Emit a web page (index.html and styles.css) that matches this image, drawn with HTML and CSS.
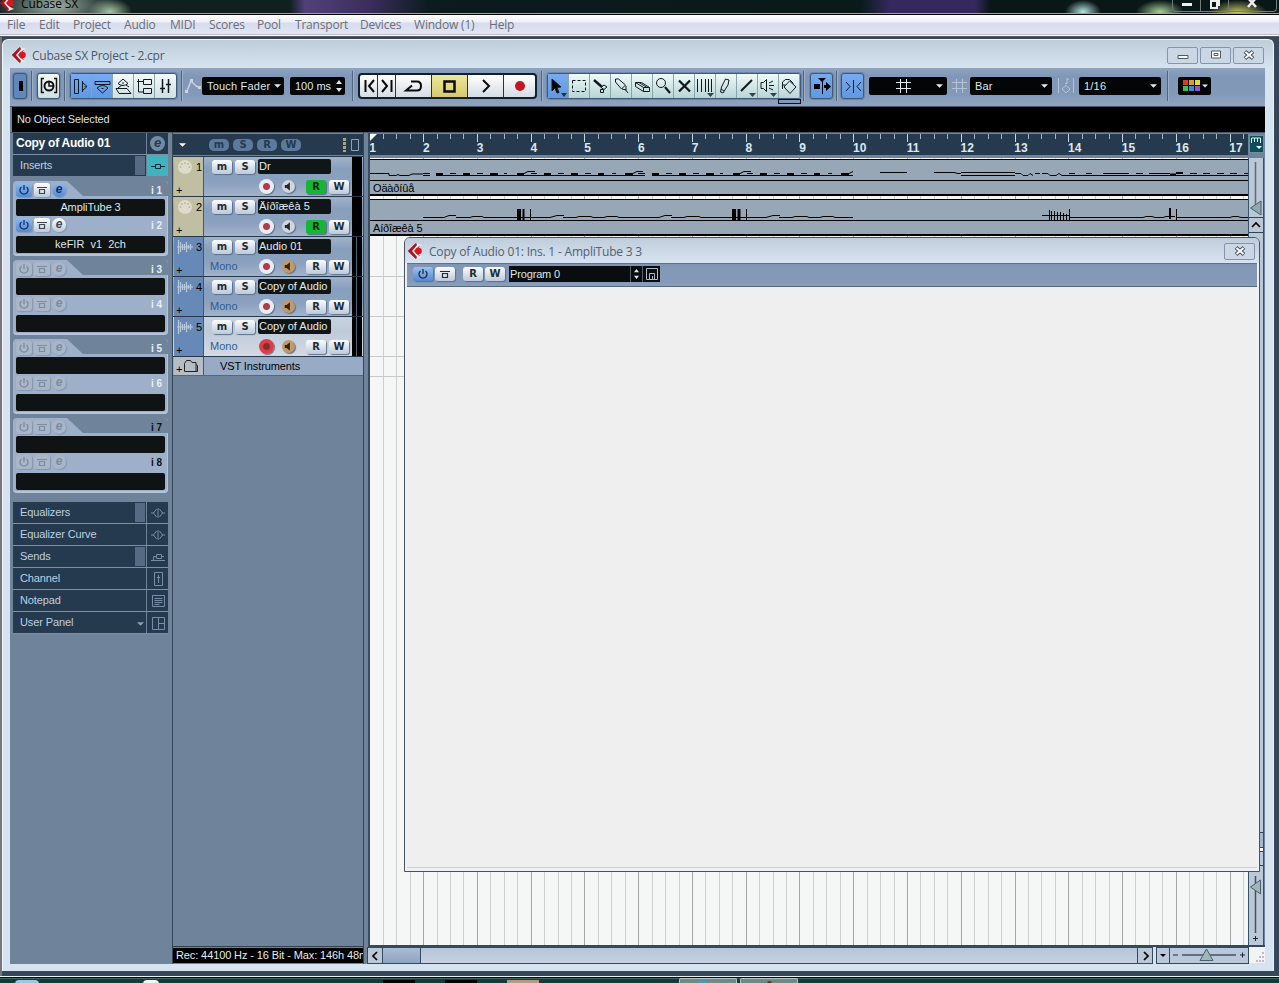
FILE: index.html
```html
<!DOCTYPE html>
<html lang="en">
<head>
    <meta charset="UTF-8">
    <title>Cubase SX</title>
    <link rel="stylesheet" href="styles.css">
</head>
<body>

    <!-- Shared icons -->
    <svg class="defs" width="0" height="0">
        <symbol id="logo" viewBox="0 0 16 16">
            <path d="M0 8 8 0l4 3-4 5 4 5-4 3z" fill="#9c1622"/>
            <path d="M8 0l6 2-4 2-4 4 4 4 4 2-6 2-5-8z" fill="#f4e9e9"/>
            <path d="M0 8 8 0l1 2-5 6 5 6-1 2z" fill="#a81420"/>
            <circle cx="10.500" cy="8" r="3.300" fill="#d8171f"/>
        </symbol>
        <symbol id="power" viewBox="0 0 16 14">
            <path d="M5.500 4a4 4 0 1 0 5 0M8 2v5" fill="none" stroke="currentColor" stroke-width="1.300"/>
        </symbol>
        <symbol id="bypass" viewBox="0 0 16 14">
            <path d="M3 4.500h10M5.500 6.500h5v4h-5z" fill="none" stroke="currentColor" stroke-width="1.200"/>
        </symbol>
        <symbol id="speaker" viewBox="0 0 14 14">
            <path d="M3 5.500h2l3.500-3v9L5 8.500H3z" fill="currentColor"/>
        </symbol>
        <symbol id="din" viewBox="0 0 16 16">
            <circle cx="8" cy="8" r="7" fill="#dddccb"/>
            <g fill="#bcbba2"><circle cx="3.500" cy="8" r="1"/><circle cx="12.500" cy="8" r="1"/><circle cx="5" cy="5" r="1"/><circle cx="11" cy="5" r="1"/><circle cx="8" cy="4" r="1"/></g>
        </symbol>
        <symbol id="wave" viewBox="0 0 16 16">
            <path d="M0 8h16M1.500 1v14M3.500 3v10M5.500 5v6M7.500 5v6M9.500 3v10M11.500 6v4M13.500 5v6" stroke="#b9c8dc" stroke-width="1.200"/>
        </symbol>
        <symbol id="close" viewBox="0 0 12 10">
            <path d="M2 1.500l8 7M10 1.500l-8 7" stroke="#4d5968" stroke-width="4"/>
            <path d="M2.500 2l7 6M9.500 2l-7 6" stroke="#fff" stroke-width="1.800"/>
        </symbol>
        <symbol id="grid" viewBox="0 0 16 16">
            <path d="M4.500 1v14M10.500 1v14M0 4.500h15M0 10.500h15" stroke="currentColor" fill="none"/>
        </symbol>
        <symbol id="down" viewBox="0 0 8 4"><path d="M0 0h8L4 4z" fill="currentColor"/></symbol>
        <symbol id="spin" viewBox="0 0 6 12"><path d="M0 4l3-4 3 4zM0 8h6l-3 4z" fill="currentColor"/></symbol>
    </svg>

    <header class="titlebar">
        <svg class="logo" width="16" height="16"><use href="#logo"/></svg>
        <span class="app-name">Cubase SX</span>
        <div class="win-buttons">
            <span><svg width="12" height="12"><path d="M1 5h10v3H1z" fill="#eee"/></svg></span>
            <span><svg width="12" height="12"><path d="M2 3h6v7H2zM5 1h5v7" fill="none" stroke="#eee" stroke-width="2"/></svg></span>
            <span class="wide"><svg width="12" height="12"><path d="M2 0l8 9M10 0L2 9" stroke="#eee" stroke-width="2.500"/></svg></span>
        </div>
    </header>

    <nav class="menu">
        <a style="width:32px">File</a><a style="width:34px">Edit</a><a style="width:51px">Project</a><a style="width:46px">Audio</a><a style="width:39px">MIDI</a><a style="width:48px">Scores</a><a style="width:38px">Pool</a><a style="width:65px">Transport</a><a style="width:54px">Devices</a><a style="width:75px">Window (1)</a><a>Help</a>
    </nav>

    <main class="desktop">
        <div class="window">
            <div class="window-title">
                <svg width="16" height="16"><use href="#logo"/></svg>
                <span>Cubase SX Project - 2.cpr</span>
                <div class="mdi-buttons">
                    <i><svg width="12" height="10"><path d="M1 5.500h10v3H1z" fill="#fff" stroke="#4d5968"/></svg></i>
                    <i><svg width="12" height="10"><path d="M1.500 1h9v7h-9z" fill="#fff" stroke="#4d5968"/><path d="M4 3.500h4v2H4z" fill="none" stroke="#4d5968"/></svg></i>
                    <i><svg width="12" height="10"><use href="#close"/></svg></i>
                </div>
            </div>

            <div class="client">
                <!-- Toolbar -->
                <div class="toolbar">
                    <span class="tool on narrow"><svg width="14" height="24"><path d="M5 7h4v10H5z"/></svg></span>
                    <b class="sep s1"></b>
                    <span class="tool"><svg width="22" height="24" fill="none" stroke="#111"><path d="M6 4.500H3.500v14H6M16 4.500h2.500v14H16" stroke-width="1.500"/><circle cx="11" cy="12" r="4.500" stroke-width="2"/><path d="M11 8v4h4" stroke-width="1.500"/></svg></span>
                    <b class="sep s1"></b>
                    <div class="group">
                        <span class="on"><svg width="21" height="24"><path d="M3.500 5.500h4v14h-4zM11.500 7v11M11 8l5 4.500-5 4.500M13.500 12.500h1"/></svg></span>
                        <span class="on"><svg width="21" height="24"><path d="M3 7.500h15v3H3zM5 14q5.500-5 11 0l-5.500 5zM9.500 14.500h2"/></svg></span>
                        <span><svg width="21" height="24"><path d="M5 9.500l5-4.500 5 4.500q-5 4-10 0zM3 14.500h11l4 5H6zM5 14l4-3M16 13l-3-2M9 9h2"/></svg></span>
                        <span><svg width="21" height="24"><path d="M3 7.500h6M4.500 5v13H9M9.500 5.500h8v5h-8zM9.500 14.500h8v5h-8z"/></svg></span>
                        <span><svg width="21" height="24"><path d="M7.500 5v14M13.500 5v14M5 14.500h5M11 10.500h5" stroke-width="1.500"/></svg></span>
                    </div>
                    <b class="sep s2"></b>
                    <svg class="auto" width="16" height="16"><path d="M2 13L6 3l5 5 4 2" fill="none" stroke="#c8d4e2" stroke-width="1.500"/><path d="M0 12h3v3H0zM5 1h3v3H5zM13 8h3v3h-3z" fill="#c8d4e2"/></svg>
                    <div class="select fader">Touch Fader<svg width="7" height="4"><use href="#down"/></svg></div>
                    <div class="select time">100 ms<svg width="6" height="12"><use href="#spin"/></svg></div>
                    <b class="sep s3"></b>
                    <div class="transport">
                        <span class="half"><svg width="18" height="22"><path d="M5.500 5v12M14 5l-5 6 5 6"/></svg></span>
                        <span class="half"><svg width="18" height="22"><path d="M13.500 5v12M4 5l5 6-5 6"/></svg></span>
                        <span><svg width="35" height="22"><path d="M15 6.500h6q4 0 4 4.500t-4 4.500H10l6-5"/></svg></span>
                        <span class="stop"><svg width="35" height="22"><path d="M12.500 6.500h10v10h-10z" stroke-width="2.500"/></svg></span>
                        <span><svg width="35" height="22"><path d="M15 5l6 6-6 6"/></svg></span>
                        <span class="rec"><svg width="34" height="22"><circle cx="16" cy="11" r="5"/></svg></span>
                    </div>
                    <b class="sep s4"></b>
                    <div class="group tools">
                        <span class="on"><svg width="21" height="24"><path d="M4 5l9 8-4 .500 2 5-2 .500-2-5-3 3z" fill="#000"/><path d="M13 19h6l-3 4z" fill="#233" stroke="none"/></svg></span>
                        <span><svg width="21" height="24"><path d="M3.500 6.500h13v11h-13z" stroke-dasharray="3 2"/></svg></span>
                        <span><svg width="21" height="24"><path d="M4 6l8 7" stroke-width="2.500"/><path d="M11 13.500l3-2.500 3 2-3 2.500zM10.500 15.500h3v3h-3z"/></svg></span>
                        <span><svg width="21" height="24"><path d="M4.500 5v3l6 7 4-4-7-6zM11 15l4 1v-4M14 15l3 4"/></svg></span>
                        <span><svg width="21" height="24"><path d="M3.500 8.500h6l8 5v4h-6l-8-5zM3.500 8.500l8 5h6M11.500 13.500v4M7 8.500l8 5"/></svg></span>
                        <span><svg width="21" height="24"><circle cx="8" cy="9" r="4.500"/><path d="M12 13l5 6" stroke-width="2.200"/></svg></span>
                        <span><svg width="21" height="24"><path d="M5 6.500l11 11M16 6.500l-11 11" stroke-width="2.300"/></svg></span>
                        <span><svg width="21" height="24"><path d="M2.500 5v13M6.500 5v13M10.500 5v13M13.500 5v13M16.500 5v13"/><path d="M12 19h7l-3.500 4z" fill="#344" stroke="none"/></svg></span>
                        <span><svg width="21" height="24"><path d="M9.500 5l3.500 1-1 5-5 8-2.500-1 1-5zM5 15l3 2"/></svg></span>
                        <span><svg width="21" height="24"><path d="M4 17L15 6" stroke-width="2"/><path d="M12 19h7l-3.500 4z" fill="#344" stroke="none"/></svg></span>
                        <span><svg width="21" height="24"><path d="M3 8.500h2.500l3-3v12l-3-3H3zM11 9l4-2M11 11.500h5M11 14l4 2"/><path d="M12 19h7l-3.500 4z" fill="#344" stroke="none"/></svg></span>
                        <span><svg width="21" height="24"><path d="M10.500 7l6.500 6-6 6.500-6-6.500zM3.500 15v-7l3-2.500h4l4 4M3.500 11h3"/></svg></span>
                        <em class="color-chip"></em>
                    </div>
                    <b class="sep s5"></b>
                    <span class="tool on"><svg width="22" height="24"><path d="M7 4h8l-4 4z"/><path d="M11.500 6v14" stroke="#000"/><path d="M3 10h6v5H3zM13 11h2V8l5 4.500-5 4.500v-3h-2z"/></svg></span>
                    <b class="sep s6"></b>
                    <span class="tool on"><svg width="22" height="24" fill="none" stroke="#122"><path d="M11.500 6v13M4 8l4 4.500L4 17M19 8l-4 4.500 4 4.500"/></svg></span>
                    <div class="select snap"><svg class="mid" width="16" height="16"><use href="#grid"/></svg><svg width="7" height="4"><use href="#down"/></svg></div>
                    <svg class="pale g1" width="16" height="16"><use href="#grid"/></svg>
                    <div class="select bar">Bar<svg width="7" height="4"><use href="#down"/></svg></div>
                    <svg class="pale g2" width="18" height="18" fill="none" stroke="currentColor"><path d="M1.500 1v15M16.500 1v15M5 12l4-3.500 4 3.500-4 4zM8 6.500h2V1l2 2"/></svg>
                    <div class="select quant">1/16<svg width="7" height="4"><use href="#down"/></svg></div>
                    <b class="sep s7"></b>
                    <div class="select palette">
                        <svg width="18" height="12"><path fill="#d83a2c" d="M0 0h5v5H0z"/><path fill="#e59a2c" d="M6 0h5v5H6z"/><path fill="#e8dc34" d="M12 0h5v5h-5z"/><path fill="#2fc45c" d="M0 6h5v5H0z"/><path fill="#2f8fe0" d="M6 6h5v5H6z"/><path fill="#9a4fd8" d="M12 6h5v5h-5z"/></svg>
                        <svg width="6" height="4"><use href="#down"/></svg>
                    </div>
                </div>

                <div class="info-line">No Object Selected</div>

                <div class="workspace">
                    <!-- Inspector -->
                    <aside class="inspector">
                        <div class="row head"><span>Copy of Audio 01</span><i><em class="ball">e</em></i></div>
                        <div class="row inserts"><span>Inserts<u></u></span><i><svg width="16" height="12"><path d="M1 6.500h4M11 6.500h4M5.500 4.500h5v4h-5z"/></svg></i></div>

                        <div class="slots active">
                            <div class="ctl tab"><b class="blue"><svg width="16" height="14"><use href="#power"/></svg></b><b><svg width="16" height="14"><use href="#bypass"/></svg></b><b class="round blue">e</b><strong>i 1</strong></div>
                            <div class="slot">AmpliTube 3</div>
                            <div class="ctl"><b class="blue"><svg width="16" height="14"><use href="#power"/></svg></b><b><svg width="16" height="14"><use href="#bypass"/></svg></b><b class="round">e</b><strong>i 2</strong></div>
                            <div class="slot">keFIR&nbsp; v1&nbsp; 2ch</div>
                        </div>
                        <div class="slots">
                            <div class="ctl tab"><b><svg width="16" height="14"><use href="#power"/></svg></b><b><svg width="16" height="14"><use href="#bypass"/></svg></b><b class="round">e</b><strong>i 3</strong></div>
                            <div class="slot"></div>
                            <div class="ctl"><b><svg width="16" height="14"><use href="#power"/></svg></b><b><svg width="16" height="14"><use href="#bypass"/></svg></b><b class="round">e</b><strong>i 4</strong></div>
                            <div class="slot"></div>
                        </div>
                        <div class="slots">
                            <div class="ctl tab"><b><svg width="16" height="14"><use href="#power"/></svg></b><b><svg width="16" height="14"><use href="#bypass"/></svg></b><b class="round">e</b><strong>i 5</strong></div>
                            <div class="slot"></div>
                            <div class="ctl"><b><svg width="16" height="14"><use href="#power"/></svg></b><b><svg width="16" height="14"><use href="#bypass"/></svg></b><b class="round">e</b><strong>i 6</strong></div>
                            <div class="slot"></div>
                        </div>
                        <div class="slots post">
                            <div class="ctl tab"><b><svg width="16" height="14"><use href="#power"/></svg></b><b><svg width="16" height="14"><use href="#bypass"/></svg></b><b class="round">e</b><strong>i 7</strong></div>
                            <div class="slot"></div>
                            <div class="ctl"><b><svg width="16" height="14"><use href="#power"/></svg></b><b><svg width="16" height="14"><use href="#bypass"/></svg></b><b class="round">e</b><strong>i 8</strong></div>
                            <div class="slot"></div>
                        </div>

                        <div class="sections">
                            <div class="row"><span>Equalizers<u></u></span><i><svg width="16" height="14"><path d="M1 7h3M12 7h3M8 2v10M6.500 3L3.500 7l3 4M9.500 3l3 4-3 4"/></svg></i></div>
                            <div class="row"><span>Equalizer Curve</span><i><svg width="16" height="14"><path d="M1 7h3M12 7h3M8 2v10M6.500 3L3.500 7l3 4M9.500 3l3 4-3 4"/></svg></i></div>
                            <div class="row"><span>Sends<u></u></span><i><svg width="16" height="14"><path d="M1 10.500h14M3.500 10V6.500h3M6.500 4.500h5v4h-5zM11.500 6.500H14"/></svg></i></div>
                            <div class="row"><span>Channel</span><i><svg width="16" height="14"><path d="M4.500.500h8v13h-8zM8.500 3v8M7 5.500h3"/></svg></i></div>
                            <div class="row"><span>Notepad</span><i><svg width="16" height="14"><path d="M2.500 1.500h12v11h-12zM4.500 4.500h8M4.500 6.500h8M4.500 8.500h8M4.500 10.500h5"/></svg></i></div>
                            <div class="row"><span>User Panel<svg class="arrow" width="7" height="4"><use href="#down"/></svg></span><i><svg width="16" height="14"><path d="M2.500 1.500h12v12h-12zM8.500 1v12M8.500 7.500h6"/></svg></i></div>
                        </div>
                    </aside>

                    <!-- Track list -->
                    <section class="tracks">
                        <div class="track-head">
                            <svg class="white" width="7" height="4"><use href="#down"/></svg>
                            <b class="first">m</b><b>S</b><b>R</b><b>W</b>
                            <svg class="cfg" width="18" height="14"><path d="M1 0h3v3H1zM1 4h3v3H1zM1 8h3v3H1zM1 12h3v2H1z" fill="#a8a680"/><path d="M9.500 1.500h7v11h-7z" fill="none" stroke="#8fa3ba"/></svg>
                        </div>

                        <div class="track">
                            <div class="kind midi"><svg width="16" height="16"><use href="#din"/></svg><span>1</span><em>+</em></div>
                            <div class="body">
                                <div class="line"><b>m</b><b>S</b><span class="name">Dr</span></div>
                                <div class="line"><span class="ch"></span><b class="dot"></b><b class="spk"><svg width="13" height="13"><use href="#speaker"/></svg></b><b class="rw green">R</b><b>W</b></div>
                            </div>
                            <div class="meter"></div>
                        </div>
                        <div class="track">
                            <div class="kind midi"><svg width="16" height="16"><use href="#din"/></svg><span>2</span><em>+</em></div>
                            <div class="body">
                                <div class="line"><b>m</b><b>S</b><span class="name">Äíðîæêà 5</span></div>
                                <div class="line"><span class="ch"></span><b class="dot"></b><b class="spk"><svg width="13" height="13"><use href="#speaker"/></svg></b><b class="rw green">R</b><b>W</b></div>
                            </div>
                            <div class="meter"></div>
                        </div>
                        <div class="track">
                            <div class="kind"><svg width="16" height="16"><use href="#wave"/></svg><span>3</span><em>+</em></div>
                            <div class="body">
                                <div class="line"><b>m</b><b>S</b><span class="name">Audio 01</span></div>
                                <div class="line"><span class="ch">Mono</span><b class="dot"></b><b class="spk gold"><svg width="13" height="13"><use href="#speaker"/></svg></b><b class="rw">R</b><b>W</b></div>
                            </div>
                            <div class="meter split"></div>
                        </div>
                        <div class="track">
                            <div class="kind"><svg width="16" height="16"><use href="#wave"/></svg><span>4</span><em>+</em></div>
                            <div class="body">
                                <div class="line"><b>m</b><b>S</b><span class="name">Copy of Audio</span></div>
                                <div class="line"><span class="ch">Mono</span><b class="dot"></b><b class="spk gold"><svg width="13" height="13"><use href="#speaker"/></svg></b><b class="rw">R</b><b>W</b></div>
                            </div>
                            <div class="meter split"></div>
                        </div>
                        <div class="track selected">
                            <div class="kind"><svg width="16" height="16"><use href="#wave"/></svg><span>5</span><em>+</em></div>
                            <div class="body">
                                <div class="line"><b>m</b><b>S</b><span class="name">Copy of Audio</span></div>
                                <div class="line"><span class="ch">Mono</span><b class="dot armed"></b><b class="spk gold"><svg width="13" height="13"><use href="#speaker"/></svg></b><b class="rw">R</b><b>W</b></div>
                            </div>
                            <div class="meter split"></div>
                        </div>
                        <div class="track folder">
                            <div class="kind"><em>+</em><svg width="16" height="14"><path d="M1.500 12.500v-8l2-3h4l1.500 2h4v9zM13 5.500l1.500 1v6h-2" fill="none" stroke="#222"/></svg></div>
                            <div class="body">VST Instruments</div>
                        </div>
                        <div class="track-space"></div>
                        <div class="rec-status">Rec: 44100 Hz - 16 Bit - Max: 146h 48m</div>
                    </section>

                    <!-- Arrangement -->
                    <section class="arrange">
                        <div class="ruler">
                            <div class="bars">
                                <span>1</span><span>2</span><span>3</span><span>4</span><span>5</span><span>6</span><span>7</span><span>8</span><span>9</span><span>10</span><span>11</span><span>12</span><span>13</span><span>14</span><span>15</span><span>16</span><span>17</span>
                                <svg class="locator" width="7" height="7"><path d="M0 0h7L0 7z" fill="#fff"/></svg>
                            </div>
                            <div class="ruler-btn"><svg width="12" height="14"><path d="M1.500 7V2h9v5M4.500 2v4M7.500 2v4" fill="none" stroke="#dff"/><path d="M6 10h6l-3 3z" fill="#dff"/></svg></div>
                        </div>
                        <div class="canvas-row">
                            <div class="canvas">
                                <div class="part">
                                    <svg width="878" height="34">
                                        <defs>
                                            <clipPath id="riff-end"><path d="M0 0h483v34H0z"/></clipPath>
                                            <g id="riff">
                                                <path d="M66 16.500h209M80 14.500h6M107 14.500h6M134 14.500h3M153 15l5-2.500h7M161 14.500h6M188 14.500h6M215 14.500h6M242 14.500h4M262 15l5-2.500h6M268 14.500h7"/>
                                                <path d="M66 15.500h7M93 15.500h7M120 15.500h8M147 15.500h7M174 15.500h7M201 15.500h7M228 15.500h6M255 15.500h8" stroke-width="3"/>
                                            </g>
                                        </defs>
                                        <g stroke="#000" fill="none">
                                            <path d="M0 14.500h19v2h7l2-1 2 1h9l3-1.500h11M53 14.500h7M53 16.500h7"/>
                                            <use href="#riff"/>
                                            <g clip-path="url(#riff-end)"><use href="#riff" x="216"/></g>
                                            <path d="M510 13.500h27M564 13.500h20l4 1h3M591 13.500h54M591 16.500h54M645 14.500h6l2 2h5l2-2 3 2M665 14.500h5M672 14.500h6l2 2h6l3-2 3 2M692 16.500h186M699 14.500h6M716 14.500h6M733 14.500h7M739 14.500h20M766 14.500h7M779 14.500h21M820 14.500h7M833 14.500h7M847 14.500h7M860 14.500h7M874 14.500h4"/>
                                            <path d="M806 14h7M800 15.500h6" stroke-width="2"/>
                                            <path d="M0 21.500h878"/>
                                        </g>
                                    </svg>
                                    <span>Oäàðíûå</span>
                                </div>
                                <div class="part">
                                    <svg width="878" height="34">
                                        <g stroke="#000" fill="none">
                                            <path d="M53 18.500H74l5-2h7M86 18.500H100l3-1h9l2 1H180l7-2h7M193 18.500h13l3-1h12l2 1h11l3-1h10l2 1H289l6-2h7M301 18.500h13l3-1h12l2 1H396l7-2h7M409 18.500h13l3-1h12l2 1h11l3-1h10l2 1H483"/>
                                            <path d="M160.500 10v11M376.500 10v11M699.500 10v11M806.500 10v11"/>
                                            <path d="M147 15.500h4M152.500 15.500h2M362 15.500h4M367.500 15.500h3M799 14.500h2" stroke-width="11"/>
                                            <path d="M672 16.500h28M679.500 11v10M681.500 12v9M684.500 12v9M687.500 13v8M690.500 13v8M693.500 14v7M696.500 15v6M700 18.500h73l3-1h6l3 1h8l3-1h9M806 18.500h54l3-1h5l3 1h7M0 21.500h878"/>
                                        </g>
                                    </svg>
                                    <span>Aíðîæêà 5</span>
                                </div>
                                <div class="lane first"></div><div class="lane"></div><div class="lane"></div><div class="lane short"></div>
                            </div>
                            <div class="vscroll">
                                <div class="zoomer"><svg width="14" height="57"><path d="M6.500 4v48" stroke="#5c6b78" stroke-width="1.500"/><path d="M1.500 50L12 43v14z" fill="#8fa9ae" stroke="#4a5f6a"/></svg></div>
                                <div class="up"><svg width="14" height="14"><path d="M3 9l4-4 4 4" fill="none" stroke="#000" stroke-width="1.600"/></svg></div>
                                <div class="thumb-space"></div>
                                <div class="pages"></div>
                                <div class="zoomer low"><svg width="14" height="77"><path d="M6.500 10v57" stroke="#44525f" stroke-width="1.500"/><path d="M1.500 21l10-7v14z" fill="#9fb6bb" stroke="#4a5f6a"/><path d="M4 72.500h5M6.500 70v5" stroke="#223"/></svg></div>
                            </div>
                        </div>
                        <div class="hscroll">
                            <div class="arrow-btn"><svg width="12" height="14"><path d="M8 3L4 7l4 4" fill="none" stroke="#000" stroke-width="1.700"/></svg></div>
                            <div class="thumb"></div>
                            <div class="rail"></div>
                            <div class="arrow-btn"><svg width="12" height="14"><path d="M5 3l4 4-4 4" fill="none" stroke="#000" stroke-width="1.700"/></svg></div>
                            <div class="hzoom">
                                <i><svg width="6" height="3"><use href="#down"/></svg></i>
                                <svg width="78" height="14"><path d="M3 7h5M70 7h5M72.500 4.500v5" stroke="#223"/><path d="M12 7h54" stroke="#44525f" stroke-width="1.500"/><path d="M30 12.500h13L36.500 1z" fill="#9fb6bb" stroke="#4a5f6a"/></svg>
                            </div>
                            <svg class="grip" width="16" height="16"><path d="M14 5v2M11 9v2M14 9v2M8 13v2M11 13v2M14 13v2" stroke="#aab" stroke-width="1.500"/></svg>
                        </div>
                    </section>
                </div>
            </div>
        </div>

        <!-- Floating insert editor -->
        <div class="plugin">
            <div class="plugin-title">
                <svg width="16" height="16"><use href="#logo"/></svg>
                <span>Copy of Audio 01: Ins. 1 - AmpliTube 3 3</span>
                <i><svg width="12" height="10"><use href="#close"/></svg></i>
            </div>
            <div class="plugin-bar">
                <b class="blue"><svg width="16" height="14"><use href="#power"/></svg></b><b><svg width="16" height="14"><use href="#bypass"/></svg></b>
                <b class="gap">R</b><b>W</b>
                <div class="program"><span>Program 0</span><i><svg width="5" height="12"><use href="#spin"/></svg></i><i class="disk"><svg width="12" height="12"><path d="M.500.500h11v11H.500zM3.500 11V5.500h5V11M6.500 8v3" fill="none" stroke="#aebac4"/></svg></i></div>
            </div>
            <div class="plugin-body"></div>
        </div>
    </main>

    <footer class="taskbar">
        <span class="orb"></span><span class="white-ico"></span>
        <span class="black one"></span><span class="black two"></span><span class="tan"></span>
        <span class="task first"><i></i></span><span class="task second"><i></i></span>
    </footer>

</body>
</html>
```
FILE: styles.css
```css
:root {
    --navy: #263a4f;
    --steel: #6f849b;
    --frame: #d6e3f1;
    --ui: "Liberation Sans", Arial, sans-serif;
    --title: "Open Sans", "Noto Sans", sans-serif;
}

* {
    margin: 0;
    padding: 0;
    box-sizing: border-box;
}

body {
    width: 1279px;
    height: 983px;
    overflow: hidden;
    background: #374659;
    font-family: var(--ui);
    font-size: 11px;
    color: #000;
    display: flex;
    flex-direction: column;
}

svg { display: block; flex: none; }
.defs { position: absolute; }
i, em { font-style: normal; }
u { text-decoration: none; }

/* Glass title bar */
.titlebar {
    height: 14px;
    flex: none;
    display: flex;
    overflow: hidden;
    border-bottom: 1px solid #9aa3a8;
    background:
        radial-gradient(ellipse 60px 26px at 55px 6px, #9fb0a5, transparent),
        radial-gradient(ellipse 22px 14px at 110px 12px, #a8c8a5, transparent),
        radial-gradient(ellipse 18px 12px at 1083px 12px, #b5e5e2, transparent),
        radial-gradient(ellipse 24px 12px at 1160px 12px, #a8cf94, transparent),
        radial-gradient(ellipse 30px 14px at 1238px 14px, #d6d46a, transparent),
        linear-gradient(90deg, #10201f 0 290px, #51417a 305px, #3b2d5c 370px, #0b1b1e 430px, #0a1a19 860px, #35285d 890px 975px, #0a1717 990px);
}

.titlebar .logo { margin-top: -5px; }
.app-name {
    margin: -4px 0 0 5px;
    font: 12px/15px var(--title);
    letter-spacing: -.1px;
}

.win-buttons {
    margin-left: auto;
    margin-right: 2px;
    display: flex;
    height: 12px;
    border: 1px solid #737c7c;
    border-top: 0;
    border-radius: 0 0 4px 4px;
}

.win-buttons span {
    width: 28px;
    padding-left: 8px;
    overflow: hidden;
    border-right: 1px solid #737c7c;
}

.win-buttons .wide { width: 47px; padding-left: 17px; border: 0; }
.win-buttons svg { margin-top: -2px; }

.menu {
    height: 22px;
    flex: none;
    padding: 3px 0 0 7px;
    display: flex;
    border-top: 1px solid #000;
    border-bottom: 1px solid #fff;
    background: linear-gradient(#fff 0, #eef0f8 7px, #d7dcee 8px, #e1e5f4 19px, #8f93a0 20px);
    color: #6c6e76;
    font: 12px/14px var(--title);
    letter-spacing: -.2px;
}

.menu a { flex: none; white-space: nowrap; }

.desktop {
    height: 940px;
    flex: none;
    padding-top: 2px;
    padding-left: 2px;
    border-top: 1px solid #56565e;
    background: linear-gradient(90deg, #77777b 0 2px, #374659 2px);
    position: relative;
}

/* Project window */
.window {
    width: 1272px;
    height: 932px;
    padding: 0 8px 7px;
    border-radius: 6px 6px 0 0;
    border: 1px solid #eef4fa;
    border-bottom: 0;
    background: linear-gradient(#bfcddb, var(--frame) 29px);
    display: flex;
    flex-direction: column;
}

.window-title {
    height: 28px;
    flex: none;
    padding: 2px 1px 0 1px;
    display: flex;
    align-items: center;
    gap: 4px;
    color: #4b5866;
    font: 12px var(--title);
    letter-spacing: -.24px;
}

.mdi-buttons {
    margin-left: auto;
    display: flex;
    gap: 2px;
}

.mdi-buttons i, .plugin-title i {
    width: 31px;
    height: 17px;
    display: flex;
    align-items: center;
    justify-content: center;
    border: 1px solid #8792ad;
    border-radius: 2px;
    background: #cbd7e5;
}

.client {
    flex: 1;
    display: flex;
    flex-direction: column;
    margin-left: -1px;
    background: var(--steel);
    overflow: hidden;
}

/* Toolbar */
.toolbar {
    height: 39px;
    flex: none;
    padding: 0 0 3px 3px;
    display: flex;
    align-items: center;
    background: linear-gradient(#90a4be, #8097b7 8px, #8299b8 26px, #90a4bd);
    border-bottom: 1px solid #43546a;
}

.toolbar > * { flex: none; }

.tool, .group {
    height: 26px;
    border: 1px solid #3e5876;
    border-radius: 3px;
    background: linear-gradient(#f3faf9, #cfdfe2);
    box-shadow: 0 0 0 1px #6e87a8;
}

.tool { width: 23px; overflow: hidden; }
.tool.narrow { width: 14px; }
.tool.on, .group .on { background: linear-gradient(#77aaf0, #5f98e2); }
.tool.narrow { background: #5f89bb; }

.sep {
    width: 2px;
    height: 30px;
    border-left: 1px solid #50647d;
    border-right: 1px solid #9db0c8;
}
.s1 { margin: 0 4px; }
.s2 { margin: 0 2px 0 4px; }
.s3 { margin: 0 4px 0 7px; }
.s4 { margin: 0 4px; }
.s5 { margin: 0 5px 0 2px; }
.s6 { margin: 0 3px 0 3px; }
.s7 { margin: 0 9px 0 6px; }

.group {
    display: flex;
    position: relative;
}

.group span {
    width: 21px;
    border-right: 1px solid #8ba3ad;
    overflow: hidden;
}
.group:not(.tools) span:last-of-type { border: 0; }
.group svg { fill: none; stroke: #101820; }
.tools { background: linear-gradient(#eefaf9, #b9d4d6); }

.color-chip {
    position: absolute;
    right: -1px;
    bottom: -6px;
    width: 23px;
    height: 5px;
    border: 1px solid #10151c;
    background: #8298b6;
}

.select {
    height: 18px;
    padding: 0 4px 0 5px;
    display: flex;
    align-items: center;
    justify-content: space-between;
    background: #030506;
    border-radius: 2px;
    color: #dfe8ea;
    letter-spacing: .2px;
}

.fader { width: 82px; margin-left: 1px; padding-right: 3px; }
.time { width: 55px; margin-left: 6px; padding-right: 3px; letter-spacing: 0; }
.snap { width: 78px; margin-left: 5px; }
.snap .mid { margin-left: 22px; }
.bar { width: 82px; margin-left: 2px; }
.quant { width: 82px; margin-left: 4px; }
.palette { width: 33px; padding: 0 3px 0 5px; }
.pale { color: #b3c4d8; }
.g1 { margin-left: 5px; }
.g2 { margin-left: 5px; }

.transport {
    height: 26px;
    display: flex;
    border: 2px solid #10202d;
    border-radius: 4px;
    background: linear-gradient(#fff, #d5dce5);
    overflow: hidden;
}

.transport span { width: 36px; border-right: 1px solid #26343f; }
.transport .half { width: 18px; }
.transport span:last-child { width: 31px; border: 0; }
.transport .stop { background: linear-gradient(#eee69a, #d5ca70); }
.transport svg { fill: none; stroke: #0a0a0a; stroke-width: 2; }
.transport .rec svg { fill: #c4161e; stroke: none; }

.info-line {
    height: 25px;
    flex: none;
    margin-left: 2px;
    padding-left: 5px;
    background: #000;
    color: #dbe4e8;
    line-height: 25px;
    letter-spacing: -.12px;
}

.workspace {
    flex: 1;
    display: flex;
    min-height: 0;
    border-top: 1px solid #4d5b69;
}

/* Inspector */
.inspector {
    width: 162px;
    flex: none;
    padding: 0 4px 0 3px;
}

.row {
    height: 22px;
    display: flex;
    border-bottom: 1px solid #7b90a6;
    color: #bdd0e0;
    letter-spacing: -.12px;
}

.row span {
    width: 133px;
    padding-left: 7px;
    padding-bottom: 1px;
    display: flex;
    align-items: center;
    background: var(--navy);
    position: relative;
}

.row > i {
    width: 21px;
    margin-left: 1px;
    display: flex;
    align-items: center;
    justify-content: center;
    background: var(--navy);
}

.row svg { fill: none; stroke: #768da5; }
.row u { width: 10px; height: 19px; margin-left: auto; margin-right: 1px; background: #566a83; }
.row .arrow { margin: 4px 2px 0 auto; color: #8ba0b6; stroke: none; }
.head span { padding-left: 3px; font-weight: bold; font-size: 12px; color: #fff; letter-spacing: -.25px; }
.inserts { height: 21px; border: 0; }
.inserts > i { background: #3fb4bd; }
.inserts svg { stroke: #102c3c; }

.ball {
    width: 15px;
    height: 15px;
    border-radius: 50%;
    background: #758ba5;
    color: #26394d;
    font: italic bold 13px/13px var(--ui);
    text-align: center;
}

.slots {
    width: 155px;
    height: 75px;
    margin-top: 4px;
    padding: 0 3px;
    border-radius: 4px;
    background: #9eb0c9;
    box-shadow: inset -1px -2px 0 #b4c3d5;
    overflow: hidden;
}
.inserts + .slots { margin-top: 5px; }

.ctl {
    height: 20px;
    padding: 2px 0 2px;
    display: flex;
    gap: 2px;
    position: relative;
}

.tab { height: 18px; }

/* notch that gives the group its folder-tab outline */
.tab::after {
    content: "";
    position: absolute;
    left: 51px;
    right: -3px;
    top: 0;
    height: 15px;
    background: var(--steel);
    clip-path: polygon(0 0, 100% 0, 100% 100%, 16px 100%);
}

.ctl b {
    width: 16px;
    height: 14px;
    border-radius: 3px;
    background: #a9b6c8;
    box-shadow: 1px 1px 1px #8597b0;
    color: #7c8b9f;
}

.ctl .round {
    width: 14px;
    border-radius: 50%;
    font: italic bold 12px/12px var(--ui);
    text-align: center;
}

.active b { background: linear-gradient(#fff, #bccad8); color: #3c4654; }
.active .blue { background: linear-gradient(#8fb9f0, #5389d4); color: #112f60; }

.ctl strong {
    position: absolute;
    right: 3px;
    top: 4px;
    z-index: 1;
    color: #e8eef5;
    font-size: 10px;
}
.post strong { color: #0c1014; }

.slot {
    height: 17px;
    border-radius: 2px;
    background: #101314;
    color: #dce8ee;
    text-align: center;
    line-height: 17px;
    letter-spacing: -.1px;
}
.active .slot:last-child { letter-spacing: 0; }

.sections { margin-top: 9px; }

/* Track list */
.tracks {
    width: 192px;
    flex: none;
    display: flex;
    flex-direction: column;
    border-left: 1px solid #354656;
    border-right: 1px solid #354656;
}

.track-head {
    height: 22px;
    margin-top: 1px;
    flex: none;
    display: flex;
    align-items: center;
    background: var(--navy);
    border-bottom: 1px solid #718398;
}

.white { margin-left: 6px; color: #fff; }
.track-head b {
    width: 20px;
    height: 12px;
    margin-right: 4px;
    border-radius: 5px;
    background: #5d799b;
    color: var(--navy);
    font: bold 10px/12px "DejaVu Sans", sans-serif;
    text-align: center;
}
.track-head .first { margin-left: 23px; }
.cfg { margin-left: auto; margin-right: 3px; }

.track {
    height: 40px;
    flex: none;
    display: flex;
    padding-left: 1px;
    border-top: 1px solid #26384a;
    background: linear-gradient(#a1b3cb, #879ebd 12px, #8ba1bf 26px, #a2b3cc);
}

.kind {
    width: 30px;
    position: relative;
    display: flex;
    gap: 3px;
    padding: 2px 0 0 3px;
    background: #6689b8;
    border-right: 1px solid #42576f;
    line-height: 16px;
}
.kind.midi { background: #c0bfa4; }
.kind em { position: absolute; left: 2px; bottom: 0; line-height: 11px; }

.body { width: 148px; padding: 0 0 0 8px; }

.line { display: flex; align-items: center; height: 19px; }
.line + .line { margin-top: 1px; }

.line b, .plugin-bar b {
    width: 20px;
    height: 14px;
    margin-right: 3px;
    flex: none;
    border-radius: 3px;
    background: linear-gradient(#fafcfe, #bccada);
    box-shadow: 1px 1px 1px #5c708a;
    font: bold 10px/14px "DejaVu Sans", sans-serif;
    text-align: center;
    color: #222a33;
}

.name {
    width: 73px;
    height: 15px;
    margin-left: 0;
    padding-left: 1px;
    flex: none;
    background: #101618;
    border-radius: 2px;
    color: #e2ebef;
    line-height: 15px;
    letter-spacing: 0;
    white-space: nowrap;
    overflow: hidden;
}

.ch { width: 49px; color: #315c92; margin-left: -2px; margin-top: -2px; letter-spacing: 0; }

.line .dot {
    width: 15px;
    height: 15px;
    margin-left: 2px;
    margin-right: 8px;
    border-radius: 50%;
    background: radial-gradient(#a83e48 0 3px, #e8edf2 4px);
}
.line .armed { background: radial-gradient(#8a2a30 0 3px, #e03c42 4px); }

.line .spk { width: 13px; height: 13px; margin-right: 11px; border-radius: 50%; background: #d0d7df; }
.line .gold { background: #c19a6b; color: #33240e; }
.line .green { background: #15b637; color: #042c0b; }

.meter { flex: 1; margin-right: 1px; background: #000; }
.split { background: linear-gradient(90deg, #000 4px, #53657b 4px 5px, #000 5px); }
.selected { background: linear-gradient(#c9d2df, #bfcad9 14px, #d4dae4); }

.folder { height: 20px; background: #98abc6; border-bottom: 1px solid #53677e; }
.folder .kind { background: #b7bdc7; padding: 2px 0 0 9px; }
.folder .body { padding: 3px 0 0 16px; letter-spacing: -.1px; }

.track-space { flex: 1; border-bottom: 1px solid #303f4d; }
.rec-status {
    height: 15px;
    flex: none;
    margin: 1px 0 1px;
    padding-left: 3px;
    background: #000;
    color: #e4edf0;
    line-height: 15px;
    letter-spacing: -.11px;
    white-space: nowrap;
    overflow: hidden;
}

/* Arrangement */
.arrange {
    flex: 1;
    margin-left: 4px;
    display: flex;
    flex-direction: column;
    border-left: 2px solid #3a4d60;
}

.ruler { height: 25px; flex: none; display: flex; padding-top: 1px; }

.bars {
    width: 878px;
    height: 21px;
    display: flex;
    position: relative;
    overflow: hidden;
    background:
        repeating-linear-gradient(90deg, #c9d6de 0 1px, transparent 1px 53.76px) -.6px 0 / 101% 8px no-repeat,
        repeating-linear-gradient(90deg, #a3b6c4 0 1px, transparent 1px 13.44px) -.6px 0 / 101% 5px no-repeat,
        var(--navy);
    color: #dbe8ee;
    font: bold 12px/14px var(--ui);
}
.bars span { width: 53.76px; flex: none; padding-top: 7px; position: relative; left: -.7px; }
.locator { position: absolute; left: 0; top: 0; }

.ruler-btn {
    width: 15px;
    height: 18px;
    margin: 1px 0 0 1px;
    background: #0d4d5c;
    border: 1px solid #69949c;
}

.canvas-row { flex: 1; min-height: 0; display: flex; border-bottom: 2px solid #35495c; }

.canvas {
    width: 878px;
    padding-top: 1px;
    background:
        repeating-linear-gradient(90deg, #a3a6a6 0 1px, transparent 1px 53.76px) -.6px 0 / 101% 100%,
        repeating-linear-gradient(90deg, #cbcfce 0 1px, transparent 1px 13.44px) -.6px 0 / 101% 100%,
        #f5f7f6;
}

.part {
    height: 37px;
    margin-bottom: 3px;
    position: relative;
    border-top: 1px solid #000;
    border-bottom: 2px solid #000;
    background: #98a7b6;
    overflow: hidden;
}
.part svg { margin-top: -1px; }
.part span { position: absolute; left: 3px; bottom: 0; line-height: 12px; letter-spacing: -.15px; }

.lane { height: 40px; border-bottom: 1px solid #c6caca; }
.lane.first { height: 38px; }
.lane.short { height: 20px; }

.vscroll {
    width: 16px;
    flex: none;
    display: flex;
    flex-direction: column;
    border-left: 1px solid #3a5064;
    border-right: 1px solid #3a5064;
    background: #bac8d7;
}
.zoomer { height: 60px; border-bottom: 1px solid #2f4354; }
.up { height: 15px; border-bottom: 1px solid #2f4354; }
.thumb-space { flex: 1; }
.pages { height: 34px; border: solid #2f4354; border-width: 1px 0; background: linear-gradient(#a4b8cb 14px, #2f4354 14px 15px, #fff 15px 18px, #2f4354 18px 19px, #bac8d7 19px); }
.low { height: 79px; border: 0; }

.hscroll {
    height: 17px;
    flex: none;
    display: flex;
    margin-left: -3px;
    background: var(--frame);
}
.arrow-btn { width: 16px; padding: 1px 1px; border: 1px solid #35495c; background: #bac8d7; }
.thumb { width: 38px; background: linear-gradient(#a9bcd2, #8fa5c0); border: solid #35495c; border-width: 1px 1px 1px 0; }
.rail { width: 716px; border: solid #35495c; border-width: 1px 0; background: linear-gradient(#b5c5d7, #c7d2e2); }
.hzoom {
    width: 93px;
    margin-left: 3px;
    display: flex;
    border: 1px solid #35495c;
    background: #b9c9db;
}
.hzoom i { width: 13px; padding: 6px 0 0 3px; border-right: 1px solid #35495c; }
.grip { background: #f1f3f4; }

/* Plugin editor window */
.plugin {
    position: absolute;
    left: 404px;
    top: 200px;
    width: 856px;
    height: 635px;
    padding: 0 2px 3px;
    border: 1px solid #48535f;
    border-radius: 6px 6px 0 0;
    background: #edf1f5;
    display: flex;
    flex-direction: column;
}

.plugin-title {
    height: 25px;
    flex: none;
    margin: 0 -2px;
    padding: 1px 4px 0 3px;
    display: flex;
    align-items: center;
    gap: 5px;
    border-radius: 5px 5px 0 0;
    background: linear-gradient(#bfccda, #d8e4f1);
    color: #536171;
    font: 12px var(--title);
    letter-spacing: -.2px;
}
.plugin-title i { margin-left: auto; }

.plugin-bar {
    height: 24px;
    flex: none;
    padding: 2px 0 0 6px;
    display: flex;
    background: linear-gradient(#7e94b0, #8499b8 4px 18px, #8ca0ba);
    border-top: 1px solid #5e738a;
    border-bottom: 1px solid #53677c;
}
.plugin-bar b { margin: 1px 2px 0 0; }
.plugin-bar b svg { margin-left: 2px; }
.plugin-bar .blue { background: linear-gradient(#9bc2f2, #5389d4); }
.plugin-bar .gap { margin-left: 6px; }

.program {
    width: 151px;
    height: 16px;
    margin-left: 2px;
    display: flex;
    background: #0a0d0f;
    color: #dce6ea;
    line-height: 16px;
    letter-spacing: -.15px;
}
.program span { width: 121px; padding-left: 1px; }
.program i { width: 12px; padding: 2px 0 0 3px; border-left: 1px solid #56616b; }
.program .disk { width: 18px; }

.plugin-body { flex: 1; background: #efefef; border-bottom: 1px solid #c9d1d9; }

/* Top edge of the taskbar */
.taskbar {
    height: 7px;
    flex: none;
    display: flex;
    border-top: 1px solid #e8f2f4;
    background: linear-gradient(#050d0e 1px, #436664 1px 2px, #123c3a 2px);
    overflow: hidden;
}
.taskbar span { flex: none; margin-top: 3px; height: 4px; }
.orb { width: 24px; margin-left: 15px; border-radius: 12px 12px 0 0; background: #9fc6e6; }
.white-ico { width: 16px; margin-left: 104px; border-radius: 8px 8px 0 0; background: #f5f8f8; }
.black { width: 32px; background: #000; }
.one { margin-left: 224px; }
.two { margin-left: 30px; }
.tan { width: 32px; margin-left: 30px; background: #b69a84; }
.taskbar .task { width: 58px; margin-top: 1px; height: 6px; padding: 2px 0 0 17px; border: 1px solid #b4c6c5; border-bottom: 0; border-radius: 2px 2px 0 0; background: #6e8a87; }
.task i { display: block; width: 10px; height: 4px; border-radius: 5px 5px 0 0; background: #19aee8; }
.task.first { margin-left: 140px; }
.task.second { margin-left: 3px; padding-left: 26px; }
.second i { width: 5px; background: #a3161f; }
```
